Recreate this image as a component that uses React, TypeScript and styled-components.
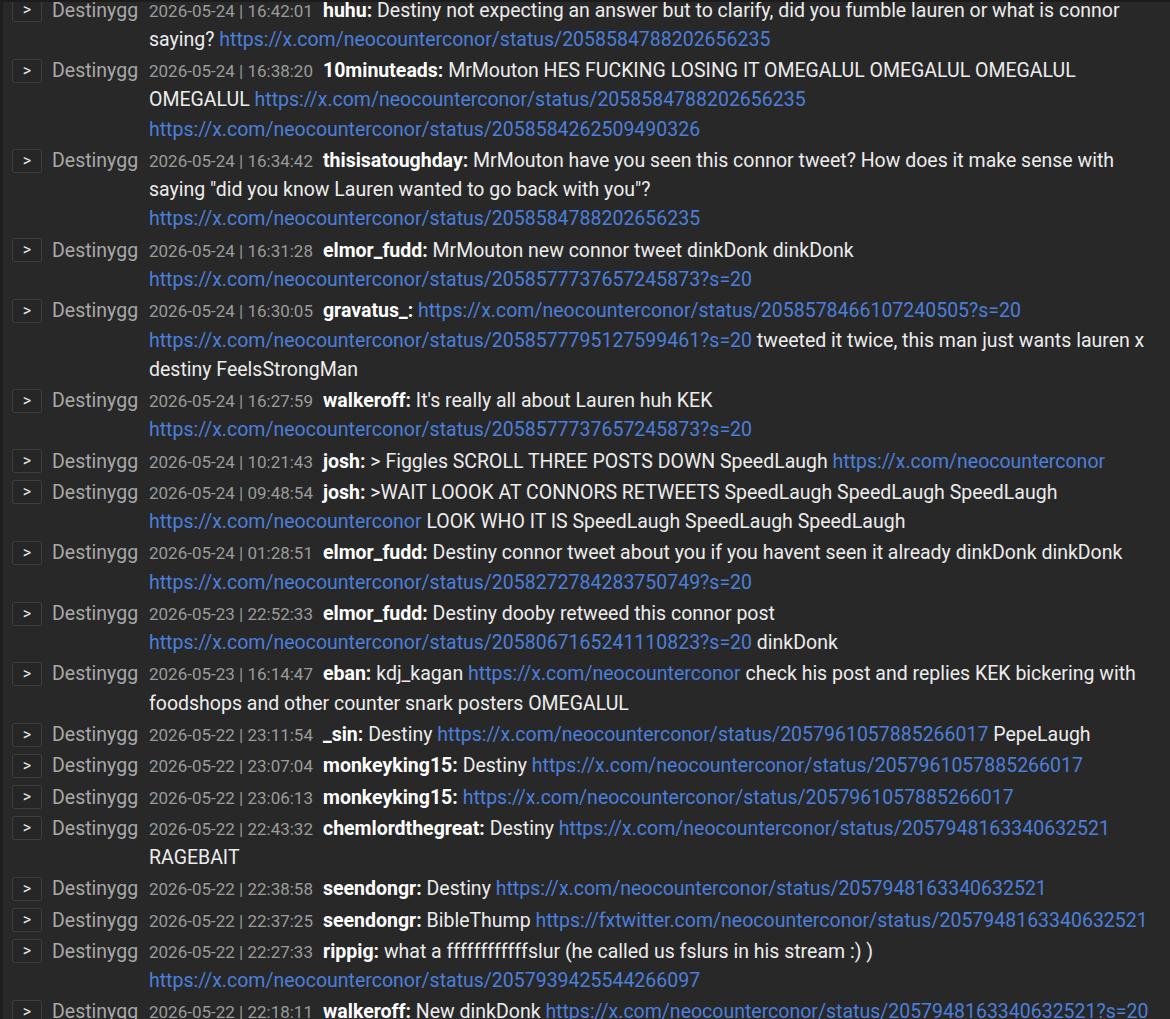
import React from "react";
import styled, { createGlobalStyle } from "styled-components";

const GlobalStyle = createGlobalStyle`
  html, body {
    margin: 0;
    padding: 0;
    background: #282828;
  }
  body {
    font-family: Roboto, "Noto Sans", "Liberation Sans", sans-serif;
    -webkit-font-smoothing: antialiased;
  }
`;

const Page = styled.div`
  width: 1170px;
  height: 1019px;
  overflow: hidden;
  box-sizing: border-box;
  border-left: 3px solid #1e1e1e;
  border-top: 2px solid #1c1c1c;
  background: #282828;
`;

const List = styled.div`
  margin-top: -7.4px;
  display: flex;
  flex-direction: column;
`;

const Row = styled.div`
  display: flex;
  align-items: flex-start;
  padding: 1px 13px 1px 9px;
  line-height: 29.27px;
`;

const ExpandButton = styled.button`
  flex: none;
  width: 30px;
  height: 24px;
  margin-top: 2.6px;
  padding: 0;
  box-sizing: border-box;
  border: 1px solid #3d3d3d;
  border-radius: 2px;
  background: #262626;
  color: #e6e6e6;
  font-family: Roboto, "Liberation Sans", sans-serif;
  font-size: 16px;
  line-height: 22px;
  text-align: center;
  cursor: pointer;
`;

const Source = styled.span`
  flex: none;
  width: 107px;
  padding-left: 10px;
  box-sizing: border-box;
  color: #a9a9a9;
  font-size: 19.5px;
  white-space: nowrap;
`;

const Body = styled.div`
  flex: 1;
  min-width: 0;
  font-size: 19.5px;
  color: #ececec;
  overflow-wrap: anywhere;
`;

const Stamp = styled.span`
  color: #9b9b9b;
  font-size: 17px;
  line-height: 1;
  margin-right: 10px;
`;

const User = styled.span`
  color: #ffffff;
  font-weight: 700;
`;

const Link = styled.a`
  color: #4b7fdc;
  text-decoration: none;
`;

type Part = string | { href: string };
type Msg = { time: string; user: string; parts: Part[] };

const L = (href: string) => ({ href });

const messages: Msg[] = [
  {
    time: "2026-05-24 | 16:42:01",
    user: "huhu",
    parts: [
      "Destiny not expecting an answer but to clarify, did you fumble lauren or what is connor saying?",
      L("https://x.com/neocounterconor/status/2058584788202656235"),
    ],
  },
  {
    time: "2026-05-24 | 16:38:20",
    user: "10minuteads",
    parts: [
      "MrMouton HES FUCKING LOSING IT OMEGALUL OMEGALUL OMEGALUL OMEGALUL",
      L("https://x.com/neocounterconor/status/2058584788202656235"),
      L("https://x.com/neocounterconor/status/2058584262509490326"),
    ],
  },
  {
    time: "2026-05-24 | 16:34:42",
    user: "thisisatoughday",
    parts: [
      'MrMouton have you seen this connor tweet? How does it make sense with saying "did you know Lauren wanted to go back with you"?',
      L("https://x.com/neocounterconor/status/2058584788202656235"),
    ],
  },
  {
    time: "2026-05-24 | 16:31:28",
    user: "elmor_fudd",
    parts: [
      "MrMouton new connor tweet dinkDonk dinkDonk",
      L("https://x.com/neocounterconor/status/2058577737657245873?s=20"),
    ],
  },
  {
    time: "2026-05-24 | 16:30:05",
    user: "gravatus_",
    parts: [
      L("https://x.com/neocounterconor/status/2058578466107240505?s=20"),
      L("https://x.com/neocounterconor/status/2058577795127599461?s=20"),
      "tweeted it twice, this man just wants lauren x destiny FeelsStrongMan",
    ],
  },
  {
    time: "2026-05-24 | 16:27:59",
    user: "walkeroff",
    parts: [
      "It's really all about Lauren huh KEK",
      L("https://x.com/neocounterconor/status/2058577737657245873?s=20"),
    ],
  },
  {
    time: "2026-05-24 | 10:21:43",
    user: "josh",
    parts: [
      "> Figgles SCROLL THREE POSTS DOWN SpeedLaugh",
      L("https://x.com/neocounterconor"),
    ],
  },
  {
    time: "2026-05-24 | 09:48:54",
    user: "josh",
    parts: [
      ">WAIT LOOOK AT CONNORS RETWEETS SpeedLaugh SpeedLaugh SpeedLaugh",
      L("https://x.com/neocounterconor"),
      "LOOK WHO IT IS SpeedLaugh SpeedLaugh SpeedLaugh",
    ],
  },
  {
    time: "2026-05-24 | 01:28:51",
    user: "elmor_fudd",
    parts: [
      "Destiny connor tweet about you if you havent seen it already dinkDonk dinkDonk",
      L("https://x.com/neocounterconor/status/2058272784283750749?s=20"),
    ],
  },
  {
    time: "2026-05-23 | 22:52:33",
    user: "elmor_fudd",
    parts: [
      "Destiny dooby retweed this connor post",
      L("https://x.com/neocounterconor/status/2058067165241110823?s=20"),
      "dinkDonk",
    ],
  },
  {
    time: "2026-05-23 | 16:14:47",
    user: "eban",
    parts: [
      "kdj_kagan",
      L("https://x.com/neocounterconor"),
      "check his post and replies KEK bickering with foodshops and other counter snark posters OMEGALUL",
    ],
  },
  {
    time: "2026-05-22 | 23:11:54",
    user: "_sin",
    parts: [
      "Destiny",
      L("https://x.com/neocounterconor/status/2057961057885266017"),
      "PepeLaugh",
    ],
  },
  {
    time: "2026-05-22 | 23:07:04",
    user: "monkeyking15",
    parts: ["Destiny", L("https://x.com/neocounterconor/status/2057961057885266017")],
  },
  {
    time: "2026-05-22 | 23:06:13",
    user: "monkeyking15",
    parts: [L("https://x.com/neocounterconor/status/2057961057885266017")],
  },
  {
    time: "2026-05-22 | 22:43:32",
    user: "chemlordthegreat",
    parts: [
      "Destiny",
      L("https://x.com/neocounterconor/status/2057948163340632521"),
      "RAGEBAIT",
    ],
  },
  {
    time: "2026-05-22 | 22:38:58",
    user: "seendongr",
    parts: ["Destiny", L("https://x.com/neocounterconor/status/2057948163340632521")],
  },
  {
    time: "2026-05-22 | 22:37:25",
    user: "seendongr",
    parts: [
      "BibleThump",
      L("https://fxtwitter.com/neocounterconor/status/2057948163340632521"),
    ],
  },
  {
    time: "2026-05-22 | 22:27:33",
    user: "rippig",
    parts: [
      "what a ffffffffffffslur (he called us fslurs in his stream :) )",
      L("https://x.com/neocounterconor/status/2057939425544266097"),
    ],
  },
  {
    time: "2026-05-22 | 22:18:11",
    user: "walkeroff",
    parts: [
      "New dinkDonk",
      L("https://x.com/neocounterconor/status/2057948163340632521?s=20"),
    ],
  },
];

function ChatRow({ msg }: { msg: Msg }) {
  return (
    <Row>
      <ExpandButton type="button">&gt;</ExpandButton>
      <Source>Destinygg</Source>
      <Body>
        <Stamp>{msg.time}</Stamp>
        <User>{msg.user}:</User>
        {msg.parts.map((p, i) =>
          typeof p === "string" ? (
            <React.Fragment key={i}> {p}</React.Fragment>
          ) : (
            <React.Fragment key={i}>
              {" "}
              <Link href={p.href}>{p.href}</Link>
            </React.Fragment>
          )
        )}
      </Body>
    </Row>
  );
}

export default function App() {
  return (
    <>
      <GlobalStyle />
      <Page>
        <List>
          {messages.map((m, i) => (
            <ChatRow key={i} msg={m} />
          ))}
        </List>
      </Page>
    </>
  );
}
